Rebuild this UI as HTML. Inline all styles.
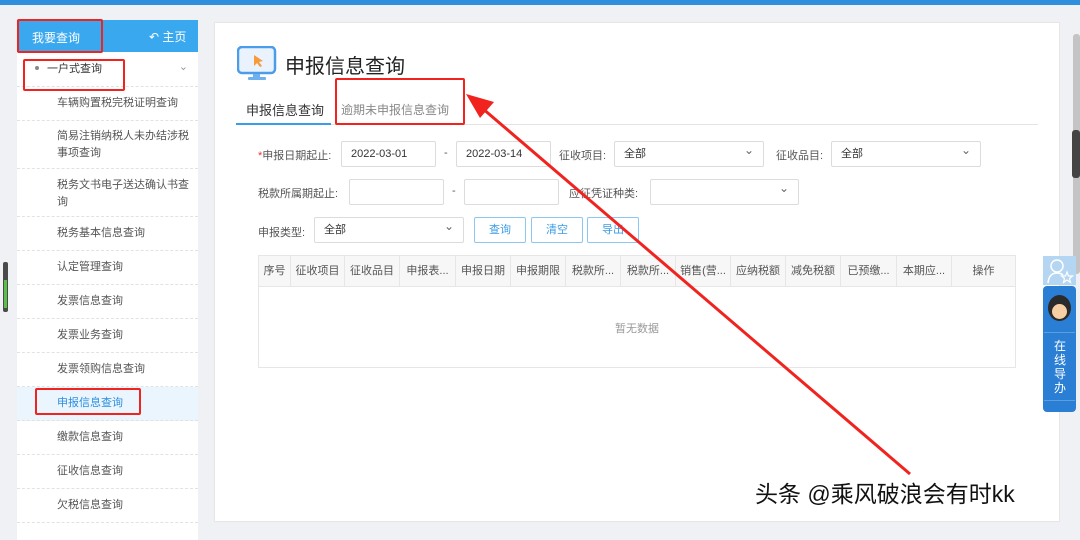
<!DOCTYPE html>
<html><head><meta charset="utf-8"><style>
*{margin:0;padding:0;box-sizing:border-box}
body{width:1080px;height:519px;overflow:hidden;background:#f0f1f4;font-family:"Liberation Sans","Noto Sans CJK SC",sans-serif;position:relative;color:#333}
.abs{position:absolute}
.top{left:0;top:0;width:1080px;height:5px;background:#2f8fdc}
.side{left:17px;top:20px;width:181px;height:520px;background:#fff}
.shead{left:17px;top:20px;width:181px;height:32px;background:#3aa8ef;color:#fff;font-size:12px}
.item{position:absolute;left:17px;width:181px;border-bottom:1px dashed #e2e2e2;font-size:11px;color:#555;padding-left:40px;line-height:17px}
.main{left:214px;top:22px;width:846px;height:500px;background:#fff;border:1px solid #e6e6e6}
.lbl{font-size:11px;color:#555}
.inp{position:absolute;border:1px solid #dcdcdc;border-radius:2px;height:26px;background:#fff;font-size:11px;line-height:24px;padding-left:9px;color:#333}
.sel:after{content:"⌄";position:absolute;right:9px;top:-4px;font-size:12px;color:#666}
.btn{position:absolute;border:1px solid #8cc7f2;border-radius:2px;height:26px;width:52px;text-align:center;line-height:24px;font-size:11px;color:#3b9de6;background:#fff}
.th{position:absolute;top:256px;height:31px;line-height:31px;font-size:11px;color:#555;text-align:center;border-right:1px solid #e6e6e6;white-space:nowrap}
.red{position:absolute;border:2px solid #f0231e;border-radius:2px}
</style></head><body>
<div class="abs top"></div>
<div class="abs side"></div>
<div class="abs shead"><span class="abs" style="left:15px;top:9px">我要查询</span><span class="abs" style="left:132px;top:8px">&#x21B6; 主页</span></div>
<div class="item" style="top:53px;height:34px;padding-left:30px;line-height:33px;color:#333">
<span style="position:absolute;left:18px;top:13px;width:4px;height:4px;border-radius:2px;background:#888"></span>一户式查询<span style="position:absolute;right:10px;top:-2px;color:#999">⌄</span></div>
<div class="item" style="top:87px;height:34px;line-height:33px">车辆购置税完税证明查询</div>
<div class="item" style="top:121px;height:48px;padding-top:7px">简易注销纳税人未办结涉税<br>事项查询</div>
<div class="item" style="top:169px;height:48px;padding-top:8px">税务文书电子送达确认书查<br>询</div>
<div class="item" style="top:217px;height:34px;line-height:33px">税务基本信息查询</div>
<div class="item" style="top:251px;height:34px;line-height:33px">认定管理查询</div>
<div class="item" style="top:285px;height:34px;line-height:33px">发票信息查询</div>
<div class="item" style="top:319px;height:34px;line-height:33px">发票业务查询</div>
<div class="item" style="top:353px;height:34px;line-height:33px">发票领购信息查询</div>
<div class="item" style="top:387px;height:34px;line-height:33px;background:#eaf5fd;color:#2d8ee0">申报信息查询</div>
<div class="item" style="top:421px;height:34px;line-height:33px">缴款信息查询</div>
<div class="item" style="top:455px;height:34px;line-height:33px">征收信息查询</div>
<div class="item" style="top:489px;height:34px;line-height:33px">欠税信息查询</div>

<div class="abs main"></div>
<svg class="abs" style="left:237px;top:46px" width="40" height="36"><rect x="1" y="1" width="37" height="26" rx="4" fill="#eaf3fd" stroke="#4b9de9" stroke-width="2.5"/><path d="M17 9 L17 20 L20 17 L23 21 L25 20 L22 16 L26 15 Z" fill="#f79a3a"/><rect x="16" y="28" width="7" height="4" fill="#6fb0ef"/><rect x="11" y="31" width="18" height="3" rx="1" fill="#6fb0ef"/></svg>
<div class="abs" style="left:285px;top:50px;font-size:20px;color:#222">申报信息查询</div>
<div class="abs" style="left:236px;top:124px;width:802px;height:1px;background:#e4e4e4"></div>
<div class="abs" style="left:236px;top:123px;width:95px;height:2px;background:#3b9de6"></div>
<div class="abs" style="left:246px;top:100px;font-size:13px;color:#333">申报信息查询</div>
<div class="abs" style="left:341px;top:101px;font-size:12px;color:#888">逾期未申报信息查询</div>

<div class="abs lbl" style="left:258px;top:147px"><span style="color:#e33">*</span>申报日期起止:</div>
<div class="inp" style="left:341px;top:141px;width:95px">2022-03-01</div>
<div class="abs lbl" style="left:444px;top:147px">-</div>
<div class="inp" style="left:456px;top:141px;width:95px">2022-03-14</div>
<div class="abs lbl" style="left:559px;top:147px">征收项目:</div>
<div class="inp sel" style="left:614px;top:141px;width:150px">全部</div>
<div class="abs lbl" style="left:776px;top:147px">征收品目:</div>
<div class="inp sel" style="left:831px;top:141px;width:150px">全部</div>

<div class="abs lbl" style="left:258px;top:185px">税款所属期起止:</div>
<div class="inp" style="left:349px;top:179px;width:95px"></div>
<div class="abs lbl" style="left:452px;top:185px">-</div>
<div class="inp" style="left:464px;top:179px;width:95px"></div>
<div class="abs lbl" style="left:569px;top:185px">应征凭证种类:</div>
<div class="inp sel" style="left:650px;top:179px;width:149px"></div>

<div class="abs lbl" style="left:258px;top:224px">申报类型:</div>
<div class="inp sel" style="left:314px;top:217px;width:150px">全部</div>
<div class="btn" style="left:474px;top:217px">查询</div>
<div class="btn" style="left:531px;top:217px">清空</div>
<div class="btn" style="left:587px;top:217px">导出</div>

<div class="abs" style="left:258px;top:255px;width:758px;height:113px;border:1px solid #e6e6e6"></div>
<div class="abs" style="left:259px;top:256px;width:756px;height:31px;background:#f7f7f7;border-bottom:1px solid #e6e6e6"></div>
<div class="th" style="left:259px;width:32px">序号</div>
<div class="th" style="left:291px;width:54px">征收项目</div>
<div class="th" style="left:345px;width:55px">征收品目</div>
<div class="th" style="left:400px;width:56px">申报表...</div>
<div class="th" style="left:456px;width:55px">申报日期</div>
<div class="th" style="left:511px;width:55px">申报期限</div>
<div class="th" style="left:566px;width:55px">税款所...</div>
<div class="th" style="left:621px;width:55px">税款所...</div>
<div class="th" style="left:676px;width:55px">销售(营...</div>
<div class="th" style="left:731px;width:55px">应纳税额</div>
<div class="th" style="left:786px;width:55px">减免税额</div>
<div class="th" style="left:841px;width:56px">已预缴...</div>
<div class="th" style="left:897px;width:55px">本期应...</div>
<div class="th" style="left:952px;width:63px;border-right:none">操作</div>
<div class="abs" style="left:615px;top:320px;font-size:11px;color:#999">暂无数据</div>

<div class="abs" style="left:1073px;top:34px;width:7px;height:240px;background:#c4c4c4;border-radius:3px"></div>
<div class="abs" style="left:1072px;top:130px;width:8px;height:48px;background:#444;border-radius:3px"></div>
<div class="abs" style="left:3px;top:262px;width:5px;height:50px;background:#4a4a4a;border-radius:2px"></div>
<div class="abs" style="left:4px;top:280px;width:3px;height:28px;background:#5cbf4a"></div>

<div class="abs" style="left:1043px;top:256px;width:33px;height:29px;background:#b5d6f3"></div>
<svg class="abs" style="left:1046px;top:257px" width="28" height="27"><circle cx="11" cy="9" r="6" fill="none" stroke="#fff" stroke-width="1.5"/><path d="M2 26 Q3 16 11 16 Q15 16 17 18" fill="none" stroke="#fff" stroke-width="1.5"/><path d="M21 15 L22.5 19 L26.5 19 L23.5 21.5 L24.5 25.5 L21 23 L17.5 25.5 L18.5 21.5 L15.5 19 L19.5 19 Z" fill="none" stroke="#fff" stroke-width="1.2"/></svg>
<div class="abs" style="left:1043px;top:286px;width:33px;height:126px;background:#2a7fd4;border-radius:4px"></div>
<div class="abs" style="left:1048px;top:295px;width:23px;height:26px;border-radius:50%;background:#2b2b2b"></div>
<div class="abs" style="left:1052px;top:304px;width:15px;height:15px;border-radius:50%;background:#f6d0a4"></div>
<div class="abs" style="left:1044px;top:332px;width:31px;height:1px;background:#5b9fe0"></div>
<div class="abs" style="left:1053px;top:339px;width:14px;font-size:12px;line-height:14px;color:#fff;text-align:center">在线导办</div>
<div class="abs" style="left:1044px;top:400px;width:31px;height:1px;background:#5b9fe0"></div>

<div class="red" style="left:17px;top:19px;width:86px;height:34px"></div>
<div class="red" style="left:23px;top:59px;width:102px;height:32px"></div>
<div class="red" style="left:35px;top:388px;width:106px;height:27px"></div>
<div class="red" style="left:335px;top:78px;width:130px;height:47px"></div>
<svg class="abs" style="left:0;top:0" width="1080" height="519"><line x1="910" y1="474" x2="482" y2="108" stroke="#f0231e" stroke-width="3"/><path d="M466 94 L494 102 L480 118 Z" fill="#f0231e"/></svg>

<div class="abs" style="left:755px;top:475px;font-size:23px;color:#111;text-shadow:1px 1px 0 #fff,-1px -1px 0 #fff">头条 @乘风破浪会有时kk</div>
</body></html>
